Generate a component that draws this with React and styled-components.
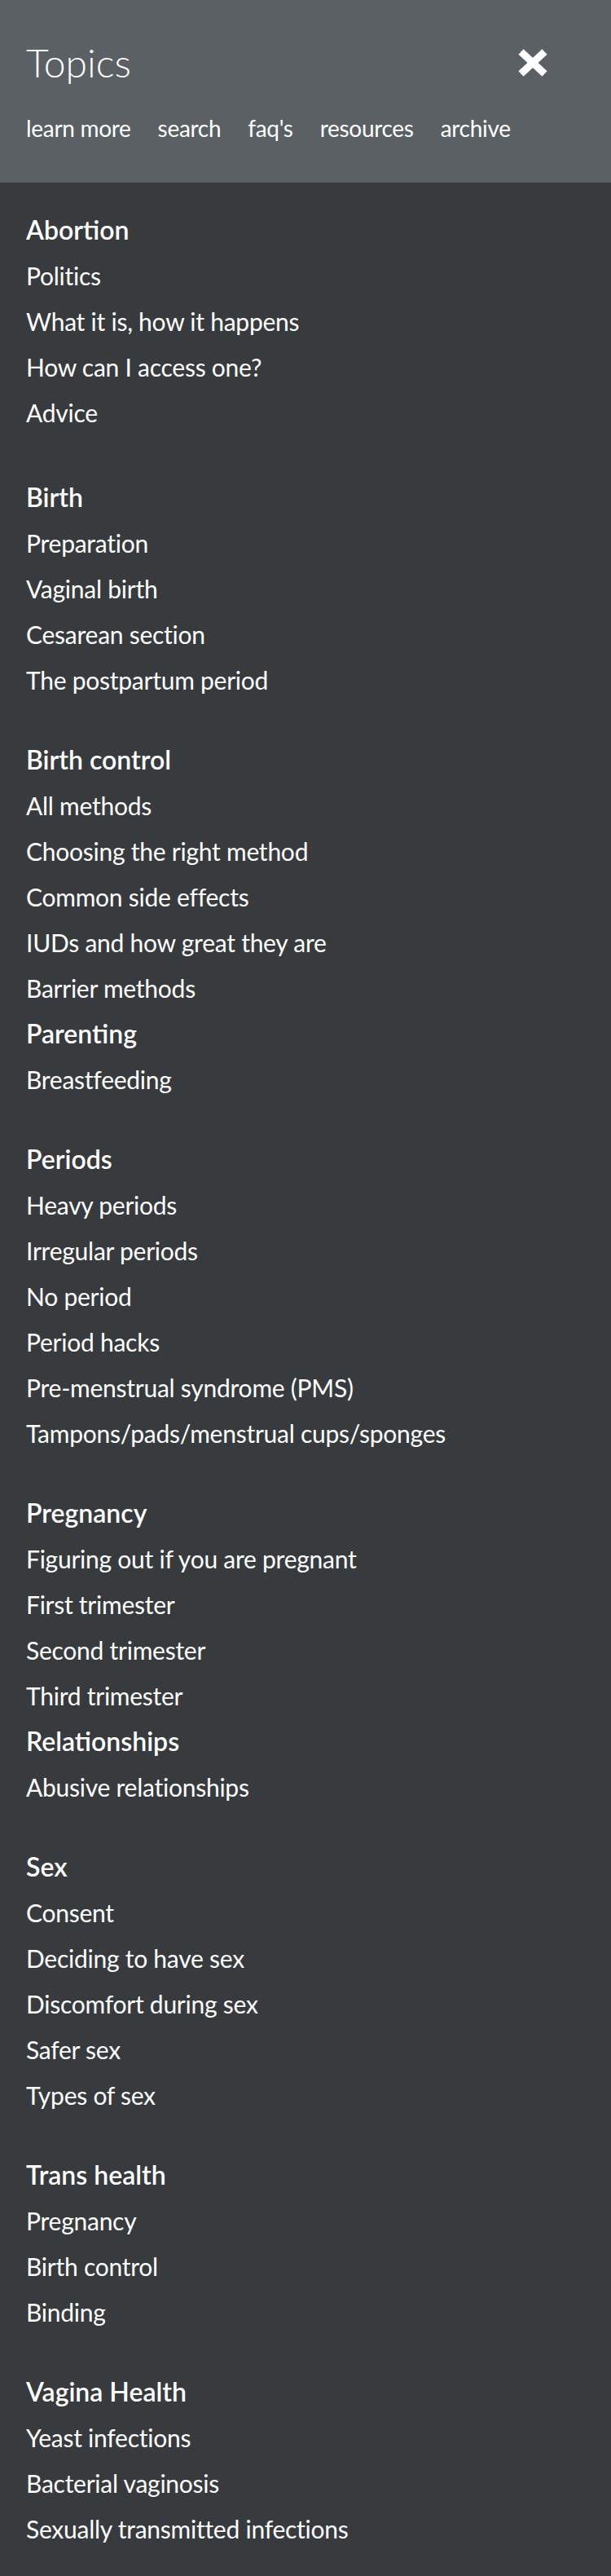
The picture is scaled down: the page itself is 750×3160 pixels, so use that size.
import React from "react";
import styled, { createGlobalStyle } from "styled-components";

const GlobalStyle = createGlobalStyle`
  html, body {
    margin: 0;
    padding: 0;
    background: #373b3e;
  }
  body {
    font-family: "Lato", "Noto Sans", sans-serif;
    color: #ffffff;
    -webkit-font-smoothing: antialiased;
  }
  * { box-sizing: border-box; }
`;

const Page = styled.div`
  width: 750px;
  min-height: 3160px;
  background: #373b3e;
`;

const Header = styled.header`
  background: #5a6063;
  height: 224px;
  padding: 48px 78px 0 32px;
  display: flex;
  flex-direction: column;
`;

const TitleRow = styled.div`
  display: flex;
  align-items: center;
  justify-content: space-between;
  height: 58px;
`;

const Title = styled.h1`
  margin: 0;
  font-family: "Lato", sans-serif;
  font-weight: 300;
  font-size: 48px;
  line-height: 58px;
  color: #ffffff;
`;

const CloseButton = styled.button`
  border: 0;
  padding: 0;
  background: transparent;
  width: 36px;
  height: 34px;
  display: flex;
  cursor: pointer;
`;

const Nav = styled.nav`
  display: flex;
  gap: 33px;
  margin-top: 31px;
`;

const NavLink = styled.a`
  font-family: "Lato", sans-serif;
  font-weight: 400;
  font-size: 28px;
  line-height: 40px;
  color: #ffffff;
  text-decoration: none;
  letter-spacing: -0.3px;
`;

const Content = styled.main`
  padding: 30px 32px 34px 32px;
`;

const Section = styled.section`
  margin-bottom: ${(p) => p.$gap}px;
`;

const SectionTitle = styled.h2`
  margin: 0;
  font-family: "Lato", sans-serif;
  font-weight: 600;
  font-size: 32px;
  line-height: 56px;
  color: #ffffff;
`;

const List = styled.ul`
  list-style: none;
  margin: 0;
  padding: 0;
`;

const Item = styled.li`
  font-family: "Lato", sans-serif;
  font-weight: 400;
  font-size: 30px;
  line-height: 56px;
  color: #ffffff;
  letter-spacing: -0.25px;
  white-space: nowrap;
`;

const CloseIcon = () => (
  <svg width="36" height="34" viewBox="0 0 36 34" aria-hidden="true">
    <g stroke="#ffffff" strokeWidth="9" strokeLinecap="butt">
      <line x1="3.5" y1="3.5" x2="32.5" y2="30.5" />
      <line x1="32.5" y1="3.5" x2="3.5" y2="30.5" />
    </g>
  </svg>
);

const navLinks = ["learn more", "search", "faq's", "resources", "archive"];

const sections = [
  {
    title: "Abortion",
    gap: 48,
    items: ["Politics", "What it is, how it happens", "How can I access one?", "Advice"],
  },
  {
    title: "Birth",
    gap: 42,
    items: ["Preparation", "Vaginal birth", "Cesarean section", "The postpartum period"],
  },
  {
    title: "Birth control",
    gap: 0,
    items: [
      "All methods",
      "Choosing the right method",
      "Common side effects",
      "IUDs and how great they are",
      "Barrier methods",
    ],
  },
  { title: "Parenting", gap: 42, items: ["Breastfeeding"] },
  {
    title: "Periods",
    gap: 42,
    items: [
      "Heavy periods",
      "Irregular periods",
      "No period",
      "Period hacks",
      "Pre-menstrual syndrome (PMS)",
      "Tampons/pads/menstrual cups/sponges",
    ],
  },
  {
    title: "Pregnancy",
    gap: 0,
    items: ["Figuring out if you are pregnant", "First trimester", "Second trimester", "Third trimester"],
  },
  { title: "Relationships", gap: 42, items: ["Abusive relationships"] },
  {
    title: "Sex",
    gap: 42,
    items: ["Consent", "Deciding to have sex", "Discomfort during sex", "Safer sex", "Types of sex"],
  },
  { title: "Trans health", gap: 42, items: ["Pregnancy", "Birth control", "Binding"] },
  {
    title: "Vagina Health",
    gap: 0,
    items: ["Yeast infections", "Bacterial vaginosis", "Sexually transmitted infections"],
  },
];

export default function App() {
  return (
    <Page>
      <GlobalStyle />
      <Header>
        <TitleRow>
          <Title>Topics</Title>
          <CloseButton aria-label="Close">
            <CloseIcon />
          </CloseButton>
        </TitleRow>
        <Nav>
          {navLinks.map((l) => (
            <NavLink key={l} href="#">
              {l}
            </NavLink>
          ))}
        </Nav>
      </Header>
      <Content>
        {sections.map((s) => (
          <Section key={s.title} $gap={s.gap}>
            <SectionTitle>{s.title}</SectionTitle>
            <List>
              {s.items.map((it) => (
                <Item key={it}>{it}</Item>
              ))}
            </List>
          </Section>
        ))}
      </Content>
    </Page>
  );
}
